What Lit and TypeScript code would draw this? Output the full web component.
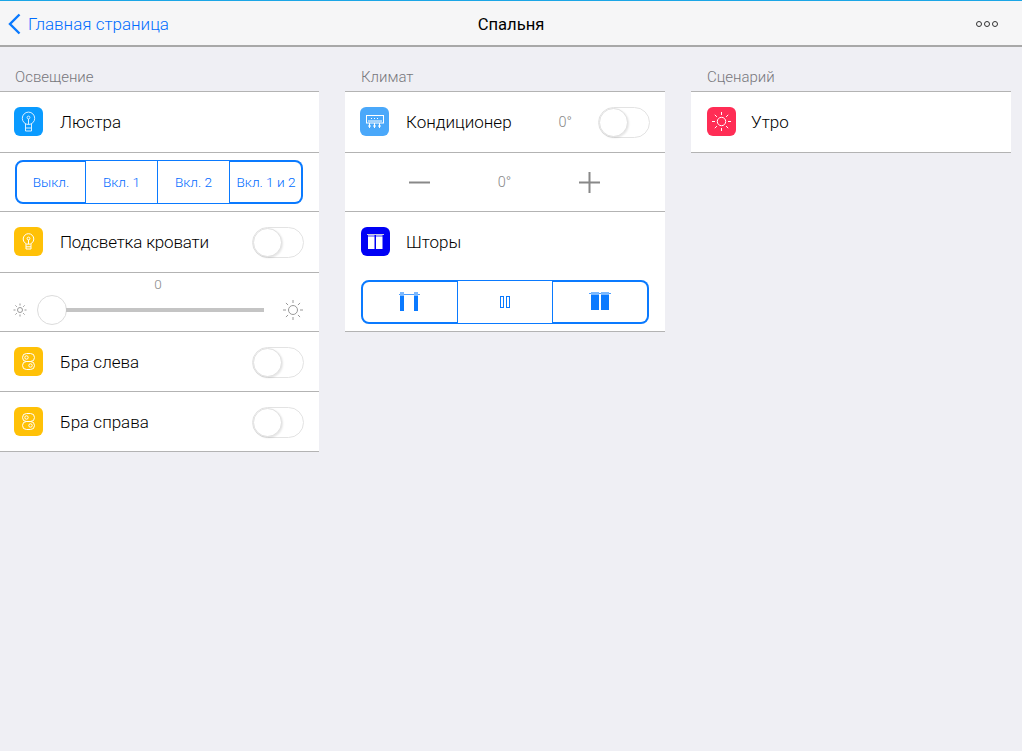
import { LitElement, html, css, svg } from "lit";
import { customElement } from "lit/decorators.js";

const bulb = svg`<g opacity=".85"><circle cx="14.5" cy="11.3" r="6.2"/><path d="M11.5 17v7h6v-7M11.5 21h6M14.5 17.5v-5.5"/><circle cx="14.5" cy="10.5" r="1.4"/></g>`;
const bulbSmall = svg`<circle cx="14.5" cy="12" r="5.3"/><path d="M12 17v5h5v-5M12 19.8h5M14.5 17v-4"/><circle cx="14.5" cy="11.5" r="1.4"/>`;
const sw = svg`<rect x="8.5" y="6.5" width="12" height="8" rx="4"/><rect x="8.5" y="14.5" width="12" height="8" rx="4"/><circle cx="12.5" cy="10.5" r="1.7"/><circle cx="16.5" cy="18.5" r="1.7"/>`;
const ac = svg`<rect x="6.5" y="8.5" width="17" height="7.5"/><path d="M8 14h14" /><path d="M11 11.5h1M14 11.5h1M17 11.5h1" /><path d="M9.5 16v5M14.5 16v5M19.5 16v5M8 19h3M13 19h3M18 19h3"/>`;
const sunRays = (c: number, r1: number, r2: number) => {
  const out = [];
  for (let i = 0; i < 8; i++) {
    const a = (i * Math.PI) / 4;
    out.push(svg`<line x1=${c + r1 * Math.cos(a)} y1=${c + r1 * Math.sin(a)} x2=${c + r2 * Math.cos(a)} y2=${c + r2 * Math.sin(a)}/>`);
  }
  return out;
};
const icon = (bg: string, body: unknown) => html`<span class="ico" style="background:${bg}"><svg width="29" height="29" viewBox="0 0 29 29" fill="none" stroke="#fff" stroke-width="1">${body}</svg></span>`;
const toggle = () => html`<span class="toggle"><span class="knob"></span></span>`;
const sun = (size: number, c: number, r: number, r1: number, r2: number, color: string) => html`<svg class="sun" width=${size} height=${size} viewBox="0 0 ${size} ${size}" fill="none" stroke=${color} stroke-width="1"><circle cx=${c} cy=${c} r=${r}/>${sunRays(c, r1, r2)}</svg>`;

@customElement("app-root")
export class AppRoot extends LitElement {
  static styles = css`
    :host { display: block; min-height: 751px; background: #efeff4; font-family: Roboto, "Liberation Sans", Arial, sans-serif; font-weight: 300; color: #000; overflow: hidden; }
    .nav { height: 42px; padding: 2px 24px 0 24px; border-top: 1px solid #1ba6e6; border-bottom: 2px solid #a8a8a8; background: #f6f6f7; display: grid; grid-template-columns: 1fr auto 1fr; align-items: center; }
    .back { display: flex; align-items: center; gap: 7px; color: #006cff; font-size: 17px; margin-left: -16px; }
    .title { font-size: 16.6px; text-align: center; color: #000; font-weight: 400; }
    .more { justify-self: end; display: flex; gap: 2px; }
    .more i { width: 6px; height: 6px; border: 1px solid #333; border-radius: 50%; box-sizing: border-box; }
    .cols { display: grid; grid-template-columns: 319px 320px 320px; column-gap: 26px; padding-top: 20px; }
    h2 { margin: 0; height: 24px; box-sizing: border-box; padding: 2px 0 0 15px; font-weight: 300; font-size: 15px; line-height: 17px; color: #77777c; }
    .c2 h2 { padding-left: 16px; }
    .c3 h2 { padding-left: 16px; }
    .list { background: #fff; border-top: 1px solid #b3b3b3; }
    .row { border-bottom: 1px solid #b3b3b3; display: flex; align-items: center; padding: 0 15px 0 14px; font-size: 17px; }
    .h60 { height: 60px; }
    .h59 { height: 59px; }
    .h58 { height: 58px; }
    .ico { width: 29px; height: 29px; border-radius: 6px; flex: none; margin-right: 17px; display: block; }
    .ico svg { display: block; }
    .h60 .ico { margin-bottom: 1px; }
    .c2 .row { padding-left: 15px; }
    .c3 .row { padding-left: 16px; }
    .c3 .ico { margin-right: 15px; }
    .grow { flex: 1; }
    .narrow { letter-spacing: -0.17px; }
    .toggle { width: 52px; height: 31px; box-sizing: border-box; border: 1px solid #e3e3e3; border-radius: 16px; flex: none; background: #fff; display: flex; }
    .h60 .toggle { margin-top: 1px; }
    .h59 .toggle { margin-top: 2px; }
    .knob { width: 29px; height: 29px; box-sizing: border-box; border-radius: 50%; background: #fff; border: 1px solid #e0e0e0; box-shadow: 1px 1px 2px rgba(0,0,0,.1); }
    .seg { display: flex; width: 288px; height: 44px; margin-left: 1px; box-sizing: border-box; color: #006cff; font-size: 13.6px; }
    .seg > span { display: flex; align-items: center; justify-content: center; box-sizing: border-box; border: 1px solid #0a7aff; border-left: none; white-space: nowrap; }
    .seg > span.first { border: 2px solid #0a7aff; border-right: 1px solid #0a7aff; border-radius: 8px 0 0 8px; }
    .seg > span.last { border: 2px solid #0a7aff; border-left: none; border-radius: 0 8px 8px 0; }
    .slider { flex-direction: column; align-items: stretch; padding: 0 15px 0 13px; }
    .val { text-align: center; font-size: 13.5px; color: #888; line-height: 15px; padding: 4px 1px 0 0; height: 15px; }
    .sl { display: flex; align-items: center; margin-top: 3px; height: 30px; }
    .thumb { width: 30px; height: 30px; box-sizing: border-box; border-radius: 50%; border: 1px solid #dcdcdc; margin-left: 10px; flex: none; background: #fff; }
    .track { width: 198px; height: 4px; margin-left: -1px; background: #c4c4c4; }
    .sun { display: block; flex: none; }
    .sunbig { margin-left: 19px; }
    .temp { color: #888; font-size: 14.5px; margin-right: 26px; }
    .c2 .climate { justify-content: space-between; padding: 0 65px 0 64px; }
    .climate .t { color: #888; font-size: 14.5px; }
    .climate svg { display: block; }
    .c2 .curt { flex-direction: column; align-items: stretch; padding: 0 16px; height: 119px; }
    .curt .top { display: flex; align-items: center; height: 60px; }
    .curt .ico { margin-right: 16px; margin-bottom: 1px; }
    .curt .seg { margin: 8px 0 0 0; }
    .curt .seg > span.first { width: 97px; }
    .curt .seg > span.mid { width: 95px; }
    .curt .seg > span.last { width: 96px; }
    .curt svg { display: block; }
    .curt .first svg { margin-right: 1px; }
    .seg4 span.first { width: 71px; }
    .seg4 span.mid { width: 72px; }
    .seg4 span.last { width: 73px; padding-left: 1px; }
  `;

  render() {
    return html`
      <div class="nav">
        <div class="back">
          <svg width="13" height="22" viewBox="0 0 13 22" fill="none" stroke="#0a7aff" stroke-width="2.4"><path d="M11.5 1.5 2 11l9.5 9.5"/></svg>
          <span>Главная страница</span>
        </div>
        <div class="title">Спальня</div>
        <div class="more"><i></i><i></i><i></i></div>
      </div>
      <div class="cols">
        <section class="c1">
          <h2>Освещение</h2>
          <div class="list">
            <div class="row h60">${icon("#0a9bff", bulb)}<span>Люстра</span></div>
            <div class="row h58">
              <div class="seg seg4">
                <span class="first">Выкл.</span><span class="mid">Вкл. 1</span><span class="mid">Вкл. 2</span><span class="last">Вкл. 1 и 2</span>
              </div>
            </div>
            <div class="row h60">${icon("#ffc107", bulbSmall)}<span class="grow narrow">Подсветка кровати</span>${toggle()}</div>
            <div class="row h58 slider">
              <div class="val">0</div>
              <div class="sl">
                ${sun(14, 7, 2.5, 4.5, 6.5, "#999")}
                <span class="thumb"></span><span class="track"></span>
                <span class="sunbig">${sun(20, 10, 4.5, 7, 10, "#999")}</span>
              </div>
            </div>
            <div class="row h59">${icon("#ffc107", sw)}<span class="grow">Бра слева</span>${toggle()}</div>
            <div class="row h59">${icon("#ffc107", sw)}<span class="grow">Бра справа</span>${toggle()}</div>
          </div>
        </section>
        <section class="c2">
          <h2>Климат</h2>
          <div class="list">
            <div class="row h60">${icon("#4aa8fa", ac)}<span class="grow">Кондиционер</span><span class="temp">0°</span>${toggle()}</div>
            <div class="row h58 climate">
              <svg width="21" height="21" viewBox="0 0 21 21" stroke="#888" stroke-width="2"><path d="M0 10.5h21"/></svg>
              <span class="t">0°</span>
              <svg width="21" height="21" viewBox="0 0 21 21" stroke="#888" stroke-width="2"><path d="M0 10.5h21M10.5 0v21"/></svg>
            </div>
            <div class="row curt">
              <div class="top"><span class="ico curtain"><svg width="29" height="29" viewBox="0 0 29 29"><rect width="29" height="29" rx="6" fill="#0000f5"/><rect x="6" y="7" width="17" height="1" fill="#ccd"/><rect x="7" y="8" width="6.5" height="2" fill="#99f"/><rect x="15" y="8" width="6.5" height="2" fill="#99f"/><rect x="7" y="10" width="6.5" height="12" fill="#fff"/><rect x="15" y="10" width="6.5" height="12" fill="#fff"/></svg></span><span>Шторы</span></div>
              <div class="seg">
                <span class="first"><svg width="21" height="20" viewBox="0 0 21 20"><rect x="0" y="2" width="21" height="1" fill="#4d9fff"/><rect x="1" y="0" width="4" height="4" fill="#7ab8ff"/><rect x="15" y="0" width="4" height="4" fill="#7ab8ff"/><rect x="1" y="4" width="4" height="15" fill="#0a7aff"/><rect x="15" y="4" width="4" height="15" fill="#0a7aff"/></svg></span>
                <span class="mid"><svg width="10" height="12" viewBox="0 0 10 12" fill="none" stroke="#0a7aff"><rect x=".5" y=".5" width="3" height="11"/><rect x="6.5" y=".5" width="3" height="11"/></svg></span>
                <span class="last"><svg width="22" height="20" viewBox="0 0 22 20"><rect x="0" y="1" width="22" height="1" fill="#4d9fff"/><rect x="2" y="0" width="8" height="3" fill="#7ab8ff"/><rect x="12" y="0" width="8" height="3" fill="#7ab8ff"/><rect x="2" y="3" width="8" height="15" fill="#0a7aff"/><rect x="12" y="3" width="8" height="15" fill="#0a7aff"/></svg></span>
              </div>
            </div>
          </div>
        </section>
        <section class="c3">
          <h2>Сценарий</h2>
          <div class="list">
            <div class="row h60">${icon("#ff2d55", svg`<circle cx="14.5" cy="14.5" r="4.2"/>${sunRays(14.5, 6.5, 9.5)}`)}<span>Утро</span></div>
          </div>
        </section>
      </div>
    `;
  }
}
